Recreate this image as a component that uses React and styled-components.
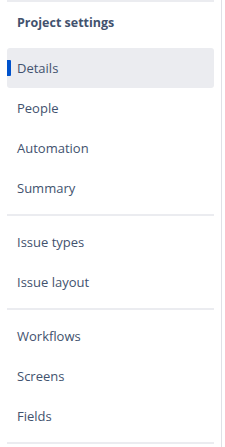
import React from 'react';
import styled, { createGlobalStyle } from 'styled-components';

const GlobalStyle = createGlobalStyle`
  html, body {
    margin: 0;
    padding: 0;
    background: #ffffff;
  }
  body {
    font-family: "Open Sans", "Noto Sans", sans-serif;
  }
`;

const Page = styled.div`
  display: flex;
  align-items: flex-start;
  width: 225px;
  height: 447px;
  overflow: hidden;
`;

const Sidebar = styled.nav`
  /* Project settings nav */
  display: flex;
  flex-direction: column;
  flex: none;
  width: 222px;
  height: 447px;
  padding: 0 7px;
  box-sizing: border-box;
  border-right: 1px solid #dfe1e6;
  background: #ffffff;
  overflow: hidden;
`;

const Divider = styled.div`
  flex: none;
  margin: ${(p) => p.$top ?? 6}px 0 ${(p) => p.$bottom ?? 6}px 0;
  height: 2px;
  background: #ebecf0;
`;

const Heading = styled.div`
  display: flex;
  align-items: center;
  flex: none;
  height: 40px;
  margin-bottom: 6px;
  padding-left: 10px;
  font-size: 12.5px;
  font-weight: 700;
  color: #42526e;
`;

const Group = styled.ul`
  display: flex;
  flex-direction: column;
  flex: none;
  list-style: none;
  margin: 0;
  padding: 0;
`;

const Item = styled.li`
  position: relative;
  display: flex;
  align-items: center;
  flex: none;
  height: 40px;
  padding-left: 10px;
  border-radius: 3px;
  font-size: 13px;
  color: #42526e;
  background: ${(p) => (p.$active ? '#ebecf0' : 'transparent')};

  &::before {
    content: '';
    display: ${(p) => (p.$active ? 'block' : 'none')};
    position: absolute;
    left: 0;
    top: 12px;
    width: 4px;
    height: 16px;
    background: #0052cc;
    border-radius: 0 1px 1px 0;
  }
`;

const groups = [
  [
    { label: 'Details', active: true },
    { label: 'People' },
    { label: 'Automation' },
    { label: 'Summary' },
  ],
  [{ label: 'Issue types' }, { label: 'Issue layout' }],
  [{ label: 'Workflows' }, { label: 'Screens' }, { label: 'Fields' }],
];

export default function App() {
  return (
    <>
      <GlobalStyle />
      <Page>
        <Sidebar>
          <Divider $top={0} $bottom={0} />
          <Heading>Project settings</Heading>
          {groups.map((items, i) => (
            <React.Fragment key={i}>
              <Group>
                {items.map((item) => (
                  <Item key={item.label} $active={item.active}>
                    {item.label}
                  </Item>
                ))}
              </Group>
              <Divider />
            </React.Fragment>
          ))}
        </Sidebar>
      </Page>
    </>
  );
}
